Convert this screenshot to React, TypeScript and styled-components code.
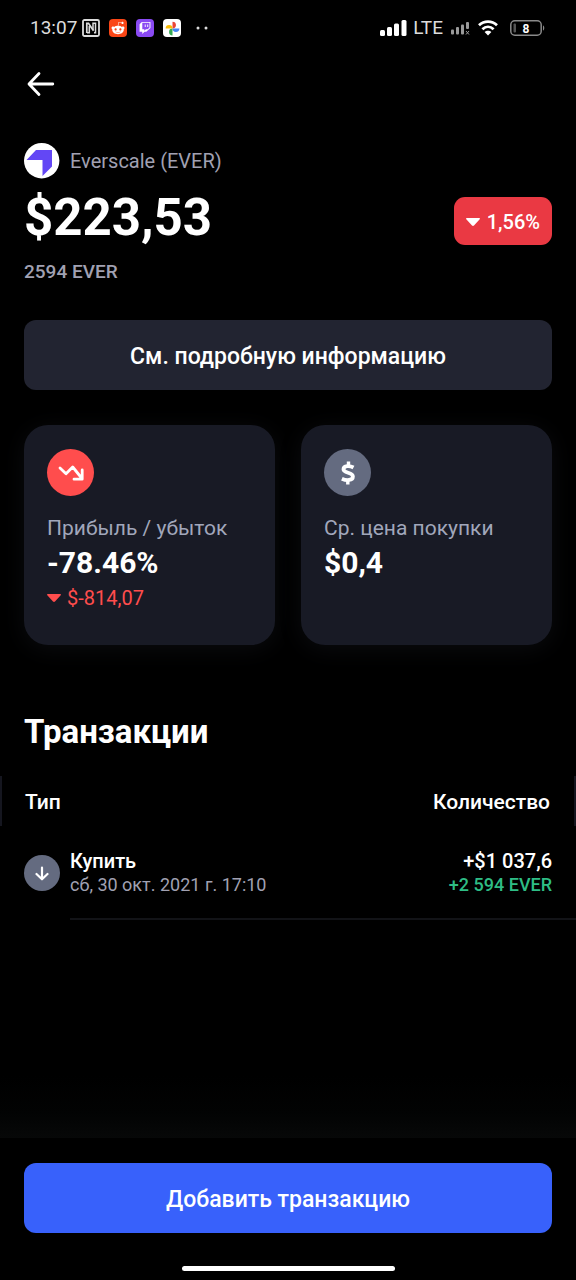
import React from "react";
import styled, { createGlobalStyle } from "styled-components";
import { FaRedditAlien, FaTwitch } from "react-icons/fa";

const GlobalStyle = createGlobalStyle`
  *, *::before, *::after { box-sizing: border-box; }
  body {
    margin: 0;
    background: #000;
    color: #fff;
    font-family: Roboto, "Liberation Sans", sans-serif;
  }
  button { font-family: inherit; cursor: pointer; }
  svg { display: block; flex: none; }
`;

const Screen = styled.div`
  display: flex;
  flex-direction: column;
  min-height: 100vh;
`;

const StatusBar = styled.header`
  display: flex;
  align-items: center;
  justify-content: space-between;
  height: 56px;
  padding: 0 30px;
  color: #dcdcdc;
  font-size: 19px;
  line-height: 24px;
`;

const StatusGroup = styled.div<{ $gap: number }>`
  display: flex;
  align-items: center;
  gap: ${(p) => p.$gap}px;
`;

const Clock = styled.time`
  margin-right: -4px;
`;

const AppBadge = styled.span<{ $bg: string }>`
  display: flex;
  align-items: center;
  justify-content: center;
  width: 18px;
  height: 18px;
  border-radius: 4px;
  background: ${(p) => p.$bg};
  color: #fff;
`;

const NavBar = styled.nav`
  display: flex;
  align-items: center;
  height: 56px;
  padding: 0 24px;
`;

const IconButton = styled.button`
  display: flex;
  padding: 0;
  border: 0;
  background: none;
  color: #fff;
`;

const Content = styled.main`
  display: flex;
  flex-direction: column;
  padding: 31px 24px 0;
`;

const Coin = styled.div`
  display: flex;
  align-items: center;
  gap: 10px;
  height: 36px;
  color: #a1a1b2;
  font-size: 20px;
`;

const Summary = styled.div`
  display: flex;
  align-items: center;
  justify-content: space-between;
  height: 78px;
`;

const Price = styled.h1`
  margin: 0;
  font-size: 51px;
  font-weight: 700;
  line-height: 60px;
`;

const ChangeBadge = styled.span`
  display: flex;
  align-items: center;
  gap: 7px;
  height: 48px;
  margin-top: 6px;
  padding: 2px 12px 0;
  border-radius: 11px;
  background: #ea3943;
  font-size: 20px;
  font-weight: 500;
`;

const Holdings = styled.p`
  margin: 3px 0 36px;
  color: #a1a1b2;
  font-size: 19px;
  font-weight: 500;
  line-height: 24px;
`;

const WideButton = styled.button<{ $bg: string }>`
  width: 100%;
  height: 70px;
  padding: 2px 0 0;
  border: 0;
  border-radius: 12px;
  background: ${(p) => p.$bg};
  color: #fff;
  font-size: 23px;
  font-weight: 500;
`;

const Cards = styled.div`
  display: grid;
  grid-template-columns: 1fr 1fr;
  gap: 26px;
  margin-top: 35px;
`;

const Card = styled.section`
  min-height: 220px;
  padding: 24px 23px;
  border-radius: 24px;
  background: #181a25;
  box-shadow: 0 4px 24px rgba(88, 102, 126, 0.12);
`;

const RoundIcon = styled.span<{ $size: number; $bg: string }>`
  display: flex;
  flex: none;
  align-items: center;
  justify-content: center;
  width: ${(p) => p.$size}px;
  height: ${(p) => p.$size}px;
  border-radius: 50%;
  background: ${(p) => p.$bg};
`;

const CardLabel = styled.h2`
  margin: 18px 0 0;
  color: #a1a7bb;
  font-size: 21px;
  font-weight: 400;
  line-height: 28px;
  white-space: nowrap;
`;

const CardValue = styled.p`
  margin: 0;
  font-size: 30px;
  font-weight: 700;
  line-height: 42px;
`;

const CardDelta = styled.p`
  display: flex;
  align-items: center;
  gap: 6px;
  margin: 0;
  color: #ff4d4d;
  font-size: 20px;
  line-height: 28px;
`;

const SectionTitle = styled.h2`
  margin: 67px 0 24px;
  font-size: 33px;
  font-weight: 700;
  line-height: 40px;
`;

const Table = styled.table`
  width: 100%;
  border-collapse: separate;
  border-spacing: 0;
`;

const HeadCell = styled.th<{ $end?: boolean }>`
  height: 50px;
  padding: 2px 24px 0 23px;
  border: 0 solid #15161f;
  border-width: ${(p) => (p.$end ? "0 2px 0 0" : "0 0 0 2px")};
  font-size: 21px;
  font-weight: 500;
  text-align: ${(p) => (p.$end ? "right" : "left")};
`;

const TypeCell = styled.td`
  padding: 0 0 0 24px;
`;

const AmountCell = styled.td`
  padding: 0;
`;

const TypeLayout = styled.div`
  display: flex;
  align-items: center;
  gap: 10px;
`;

const Lines = styled.div<{ $end?: boolean }>`
  flex: 1;
  padding: 23px ${(p) => (p.$end ? 24 : 0)}px 21px 0;
  border-bottom: 2px solid #121317;
  line-height: 24px;
  text-align: ${(p) => (p.$end ? "right" : "left")};
`;

const Line = styled.div<{ $color: string; $strong?: boolean; $size: number }>`
  color: ${(p) => p.$color};
  font-size: ${(p) => p.$size}px;
  font-weight: ${(p) => (p.$strong ? 500 : 400)};
`;

const Footer = styled.footer`
  margin-top: auto;
`;

const Fade = styled.div`
  height: 62px;
  background: linear-gradient(#000, #020303 60%, #070808);
`;

const FooterBody = styled.div`
  display: flex;
  flex-direction: column;
  align-items: center;
  padding: 25px 24px 9px;
`;

const HomeIndicator = styled.div`
  width: 213px;
  height: 5px;
  margin-top: 33px;
  border-radius: 3px;
  background: #fff;
`;

const Caret = () => (
  <svg width="14" height="8" viewBox="0 0 14 8" fill="currentColor" aria-hidden="true">
    <path d="M.8 0h12.4c.8 0 1 .8.5 1.300L8 7.500c-.6.600-1.400.600-2 0L.3 1.300C-.2.800 0 0 .8 0z" />
  </svg>
);

const NfcIcon = () => (
  <svg width="18" height="18" viewBox="0 0 18 18" fill="none" stroke="#dcdcdc" aria-hidden="true">
    <rect x="1" y="1" width="16" height="16" rx="1.500" strokeWidth="1.800" />
    <path d="M4.800 14V4.300h1.700l5 7.500" strokeWidth="1.700" />
    <path d="M7.300 7v6.700H5M11 11V4.300h2.500v9.500h-1.500" strokeWidth="1.500" />
  </svg>
);

const PhotosIcon = () => (
  <svg width="15" height="15" viewBox="0 0 24 24" aria-hidden="true">
    <path fill="#ea4335" d="M12 1a5.500 5.500 0 0 1 0 11z" />
    <path fill="#4285f4" d="M23 12a5.500 5.500 0 0 1-11 0z" />
    <path fill="#34a853" d="M12 23a5.500 5.500 0 0 1 0-11z" />
    <path fill="#fbbc04" d="M1 12a5.500 5.500 0 0 1 11 0z" />
  </svg>
);

const DotsIcon = () => (
  <svg width="18" height="4" viewBox="0 0 18 4" fill="#dcdcdc" aria-hidden="true">
    <circle cx="8" cy="2" r="1.500" />
    <circle cx="16" cy="2" r="1.500" />
  </svg>
);

const SignalIcon = () => (
  <svg width="27" height="16" viewBox="0 0 27 16" fill="#fff" aria-hidden="true">
    <rect x="0" y="10" width="5" height="6" rx="1.500" />
    <rect x="7" y="7" width="5" height="9" rx="1.500" />
    <rect x="14" y="3.500" width="5" height="12.500" rx="1.500" />
    <rect x="21.500" y="0" width="5" height="16" rx="1.500" />
  </svg>
);

const NoSignalIcon = () => (
  <svg width="19" height="13" viewBox="0 0 19 13" fill="#9a9a9a" aria-hidden="true">
    <rect x="0" y="7.500" width="3" height="5" rx="1" />
    <rect x="5" y="5" width="3" height="7.500" rx="1" />
    <rect x="10" y="2.500" width="3" height="10" rx="1" />
    <rect x="15" y="0" width="3" height="7" rx="1" />
    <path d="M15 9l3 3.500M18 9l-3 3.500" stroke="#9a9a9a" strokeWidth="1" />
  </svg>
);

const WifiIcon = () => (
  <svg width="24" height="16" viewBox="0 0 24 16" fill="none" stroke="#fff" strokeWidth="2.800" aria-hidden="true">
    <path d="M1 5.200C6.200.400 13.800.400 19 5.200" />
    <path d="M4.400 9.200C7.700 6.100 12.300 6.100 15.600 9.200" />
    <path d="M10 15.400 6.600 12c1.800-1.700 5-1.700 6.800 0z" fill="#fff" stroke="none" />
  </svg>
);

const BatteryIcon = () => (
  <svg width="36" height="16" viewBox="0 0 36 16" aria-label="8%">
    <rect x=".8" y=".8" width="30.400" height="14.400" rx="4" fill="none" stroke="#8a8a8a" strokeWidth="1.500" />
    <rect x="3.500" y="3.500" width="2.500" height="9" rx="1" fill="#555" />
    <path d="M33 5.500c1.700.500 1.700 4.500 0 5z" fill="#8a8a8a" />
    <text x="16" y="12.500" textAnchor="middle" fontSize="12" fontWeight="700" fill="#fff">8</text>
  </svg>
);

const BackArrow = () => (
  <svg width="34" height="30" viewBox="0 0 34 30" fill="none" stroke="currentColor" strokeWidth="2.800" strokeLinecap="round" strokeLinejoin="round" aria-hidden="true">
    <path d="M28.800 15H5.500M15 4.500 5 15l10 10.500" />
  </svg>
);

const EverLogo = () => (
  <svg width="36" height="36" viewBox="0 0 36 36" aria-hidden="true">
    <circle cx="17.700" cy="17.700" r="17.700" fill="#fff" />
    <path d="M2.500 17 12 7h16v16.500L18.500 33V17z" fill="#6347f5" />
  </svg>
);

const TrendDown = () => (
  <svg width="26" height="16" viewBox="0 0 26 16" fill="none" stroke="#fff" strokeWidth="2.800" strokeLinecap="round" strokeLinejoin="round" aria-hidden="true">
    <path d="M2 3l6 5.800L14.700 2 24 13.500M24.200 5v9.200H16" />
  </svg>
);

const DollarIcon = () => (
  <svg width="16" height="24" viewBox="0 0 16 24" fill="none" stroke="#fff" strokeWidth="3.800" strokeLinejoin="round" aria-hidden="true">
    <path d="M13.500 6.500C10 4.600 3.500 4.200 3.500 8.300c0 4.200 9.400 2.700 9.400 7.200 0 4.200-6.500 4.300-11 2.200" />
    <path d="M8.500.400V5M7.800 19v4.600" strokeWidth="3.400" />
  </svg>
);

const ArrowDown = () => (
  <svg width="14" height="15" viewBox="0 0 14 15" fill="none" stroke="#fff" strokeWidth="2.200" strokeLinecap="round" strokeLinejoin="round" aria-hidden="true">
    <path d="M7 1.500v11.500M1.500 8 7 13.300 12.500 8" />
  </svg>
);

export default function App() {
  return (
    <Screen>
      <GlobalStyle />
      <StatusBar>
        <StatusGroup $gap={9}>
          <Clock>13:07</Clock>
          <NfcIcon />
          <AppBadge $bg="#fa4616"><FaRedditAlien size={14} /></AppBadge>
          <AppBadge $bg="#8a4af3"><FaTwitch size={12} /></AppBadge>
          <AppBadge $bg="#fff"><PhotosIcon /></AppBadge>
          <AppBadge $bg="none"><DotsIcon /></AppBadge>
        </StatusGroup>
        <StatusGroup $gap={8}>
          <StatusGroup $gap={6}>
            <SignalIcon />
            <span>LTE</span>
          </StatusGroup>
          <NoSignalIcon />
          <WifiIcon />
          <BatteryIcon />
        </StatusGroup>
      </StatusBar>

      <NavBar>
        <IconButton type="button" aria-label="Назад"><BackArrow /></IconButton>
      </NavBar>

      <Content>
        <Coin><EverLogo />Everscale (EVER)</Coin>
        <Summary>
          <Price>$223,53</Price>
          <ChangeBadge><Caret />1,56%</ChangeBadge>
        </Summary>
        <Holdings>2594 EVER</Holdings>
        <WideButton type="button" $bg="#222431">См. подробную информацию</WideButton>
        <Cards>
          <Card>
            <RoundIcon $size={47} $bg="#ff4d4d"><TrendDown /></RoundIcon>
            <CardLabel>Прибыль / убыток</CardLabel>
            <CardValue>-78.46%</CardValue>
            <CardDelta><Caret />$-814,07</CardDelta>
          </Card>
          <Card>
            <RoundIcon $size={47} $bg="#646b80"><DollarIcon /></RoundIcon>
            <CardLabel>Ср. цена покупки</CardLabel>
            <CardValue>$0,4</CardValue>
          </Card>
        </Cards>
        <SectionTitle id="transactions">Транзакции</SectionTitle>
      </Content>

      <Table aria-labelledby="transactions">
        <thead>
          <tr>
            <HeadCell scope="col">Тип</HeadCell>
            <HeadCell scope="col" $end>Количество</HeadCell>
          </tr>
        </thead>
        <tbody>
          <tr>
            <TypeCell>
              <TypeLayout>
                <RoundIcon $size={36} $bg="#646b80"><ArrowDown /></RoundIcon>
                <Lines>
                  <Line $color="#fff" $size={20} $strong>Купить</Line>
                  <Line $color="#a1a1b2" $size={18}>сб, 30 окт. 2021 г. 17:10</Line>
                </Lines>
              </TypeLayout>
            </TypeCell>
            <AmountCell>
              <Lines $end>
                <Line $color="#fff" $size={20} $strong>+$1 037,6</Line>
                <Line $color="#2ebd85" $size={18} $strong>+2 594 EVER</Line>
              </Lines>
            </AmountCell>
          </tr>
        </tbody>
      </Table>

      <Footer>
        <Fade />
        <FooterBody>
          <WideButton type="button" $bg="#3861fb">Добавить транзакцию</WideButton>
          <HomeIndicator />
        </FooterBody>
      </Footer>
    </Screen>
  );
}
